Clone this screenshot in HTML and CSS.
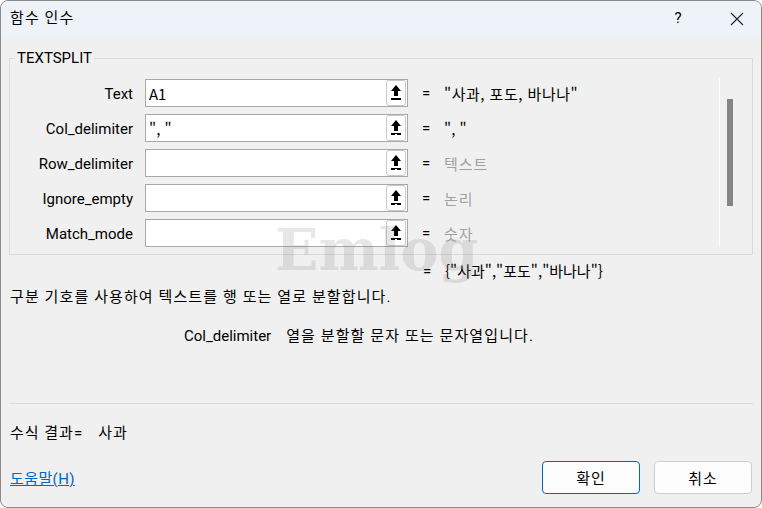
FILE: index.html
```html
<!DOCTYPE html>
<html lang="ko">
<head>
<meta charset="utf-8">
<title>함수 인수</title>
<link rel="stylesheet" href="styles.css">
</head>
<body>
<div class="window">
  <div class="titlebar">
    <span class="title">함수 인수</span>
    <div class="ctrls">
      <span class="help">?</span>
      <svg class="close" width="14" height="14" viewBox="0 0 14 14"><path d="M1 1 L13 13 M13 1 L1 13" stroke="#222" stroke-width="1.1" fill="none"/></svg>
    </div>
  </div>
  <div class="body">
    <fieldset class="group">
      <legend>TEXTSPLIT</legend>
      <div class="args">
        <div class="rows">
          <div class="row">
            <span class="label">Text</span>
            <div class="box"><span class="val">A1</span><span class="ref"><svg width="12" height="18" viewBox="0 0 12 18"><path d="M6 1 L11 7 L8 7 L8 12 L4 12 L4 7 L1 7 Z" fill="#000"/><rect x="1" y="14" width="10" height="2" fill="#000"/></svg></span></div>
            <span class="eq">=</span>
            <span class="res ko">"사과, 포도, 바나나"</span>
          </div>
          <div class="row">
            <span class="label">Col_delimiter</span>
            <div class="box"><span class="val">", "</span><span class="ref"><svg width="12" height="18" viewBox="0 0 12 18"><path d="M6 1 L11 7 L8 7 L8 12 L4 12 L4 7 L1 7 Z" fill="#000"/><rect x="1" y="14" width="10" height="2" fill="#000"/><rect x="5" y="15" width="2" height="1" fill="#fff"/></svg></span></div>
            <span class="eq">=</span>
            <span class="res">", "</span>
          </div>
          <div class="row">
            <span class="label">Row_delimiter</span>
            <div class="box"><span class="val"></span><span class="ref"><svg width="12" height="18" viewBox="0 0 12 18"><path d="M6 1 L11 7 L8 7 L8 12 L4 12 L4 7 L1 7 Z" fill="#000"/><rect x="1" y="14" width="10" height="2" fill="#000"/><rect x="5" y="15" width="2" height="1" fill="#fff"/></svg></span></div>
            <span class="eq">=</span>
            <span class="res hint">텍스트</span>
          </div>
          <div class="row">
            <span class="label">Ignore_empty</span>
            <div class="box"><span class="val"></span><span class="ref"><svg width="12" height="18" viewBox="0 0 12 18"><path d="M6 1 L11 7 L8 7 L8 12 L4 12 L4 7 L1 7 Z" fill="#000"/><rect x="1" y="14" width="10" height="2" fill="#000"/><rect x="5" y="15" width="2" height="1" fill="#fff"/></svg></span></div>
            <span class="eq">=</span>
            <span class="res hint">논리</span>
          </div>
          <div class="row">
            <span class="label">Match_mode</span>
            <div class="box"><span class="val"></span><span class="ref"><svg width="12" height="18" viewBox="0 0 12 18"><path d="M6 1 L11 7 L8 7 L8 12 L4 12 L4 7 L1 7 Z" fill="#000"/><rect x="1" y="14" width="10" height="2" fill="#000"/><rect x="5" y="15" width="2" height="1" fill="#fff"/></svg></span></div>
            <span class="eq">=</span>
            <span class="res hint">숫자</span>
          </div>
        </div>
        <div class="vline"></div>
        <div class="scroll"><div class="thumb"></div></div>
      </div>
    </fieldset>
    <div class="result"><span class="eq">=</span><span class="res">{"사과","포도","바나나"}</span></div>
    <p class="desc">구분 기호를 사용하여 텍스트를 행 또는 열로 분할합니다.</p>
    <p class="argdesc"><span class="argname">Col_delimiter</span><span class="argtext">열을 분할할 문자 또는 문자열입니다.</span></p>
    <div class="sep"></div>
    <p class="formula">수식 결과=<span class="fval">사과</span></p>
    <div class="footer">
      <a class="link" href="#">도움말(H)</a>
      <div class="buttons">
        <button class="btn primary">확인</button>
        <button class="btn">취소</button>
      </div>
    </div>
  </div>
  <div class="watermark">Emlog</div>
</div>
</body>
</html>
```
FILE: styles.css
```css
html, body {
  margin: 0;
  padding: 0;
  background: #ffffff;
}
body {
  font-family: "Roboto", "Noto Sans CJK KR", sans-serif;
  font-size: 15px;
  color: #000;
}
.window {
  position: relative;
  width: 762px;
  height: 508px;
  box-sizing: border-box;
  border: 1px solid #8a8a8a;
  border-radius: 8px;
  background: #f0f0f0;
  overflow: hidden;
}
.titlebar {
  height: 36px;
  background: #eef2f9;
  display: flex;
  align-items: center;
  justify-content: space-between;
  padding: 0 0 0 9px;
}
.title {
  font-size: 15px;
  line-height: 20px;
  margin-top: -2px;
  letter-spacing: 1.1px;
}
.ctrls {
  display: flex;
  align-items: center;
  height: 36px;
}
.help {
  width: 46px;
  text-align: center;
  font-size: 15px;
  margin-right: 29px;
  margin-top: -2px;
}
.close {
  margin-right: 17px;
}
.body {
  padding: 0 8px 0 8px;
}
.group {
  margin: 12px 0 0 0;
  border: 1px solid #dadada;
  padding: 0 0 7px 0;
  min-width: 0;
}
.group legend {
  margin-left: 5px;
  padding: 0 2px;
  line-height: 18px;
  font-size: 15px;
}
.args {
  display: flex;
  margin-top: 12px;
}
.rows {
  display: flex;
  flex-direction: column;
  gap: 7px;
  width: 709px;
}
.row {
  display: flex;
  align-items: center;
  height: 28px;
}
.label {
  width: 123px;
  text-align: right;
  margin-right: 12px;
  color: #000;
  padding-top: 1px;
}
.box {
  width: 263px;
  height: 28px;
  box-sizing: border-box;
  border: 1px solid #a8a8a8;
  background: #fff;
  display: flex;
  align-items: center;
  justify-content: space-between;
}
.val {
  padding-left: 3px;
  font-family: "Noto Sans CJK KR", sans-serif;
}
.ref {
  width: 20px;
  height: 26px;
  box-sizing: border-box;
  border: 1px solid #c9c9c9;
  border-radius: 3px;
  background: #fff;
  margin-right: 1px;
  display: flex;
  align-items: center;
  justify-content: center;
}
.eq {
  margin-left: 14px;
  width: 8px;
}
.res {
  margin-left: 14px;
  white-space: nowrap;
  font-family: "Noto Sans CJK KR", sans-serif;
}
.res.ko {
  letter-spacing: 0.5px;
}
.hint {
  color: #a0a0a0;
  letter-spacing: 1px;
}
.vline {
  width: 1px;
  background: #ffffff;
  margin-top: -1px;
}
.scroll {
  padding-left: 7px;
}
.thumb {
  width: 6px;
  height: 107px;
  margin-top: 20px;
  background: #858585;
}
.result {
  margin-top: 6px;
  height: 20px;
  line-height: 20px;
  display: flex;
  padding-left: 400px;
}
.desc {
  margin: 6px 0 0 0;
  line-height: 20px;
  padding-left: 1px;
  letter-spacing: 1.1px;
}
.argdesc {
  margin: 19px 0 0 0;
  line-height: 20px;
  padding-left: 175px;
  display: flex;
}
.argname {
  margin-right: 15px;
}
.argtext {
  letter-spacing: 1.1px;
}
.sep {
  margin-top: 57px;
  border-top: 1px solid #dadada;
}
.formula {
  margin: 19px 0 0 0;
  line-height: 20px;
  padding-left: 1px;
  letter-spacing: 1px;
}
.fval {
  margin-left: 15px;
}
.footer {
  margin-top: 18px;
  display: flex;
  justify-content: space-between;
  align-items: center;
  padding-left: 1px;
}
.link {
  color: #0067c0;
  text-decoration: underline;
  font-size: 15px;
  letter-spacing: 0.4px;
}
.buttons {
  display: flex;
  gap: 14px;
  margin-right: 1px;
}
.btn {
  width: 98px;
  height: 33px;
  box-sizing: border-box;
  border: 1px solid #cfcfcf;
  border-radius: 4px;
  background: #fdfdfd;
  font-family: inherit;
  font-size: 15px;
  letter-spacing: 1px;
  color: #000;
  padding: 0;
}
.btn.primary {
  border: 1px solid #0067c0;
}
.watermark {
  position: absolute;
  left: 274px;
  top: 214px;
  font-family: "DejaVu Serif", serif;
  font-weight: bold;
  font-size: 57px;
  line-height: 70px;
  color: rgba(120, 120, 120, 0.18);
  pointer-events: none;
}
```
